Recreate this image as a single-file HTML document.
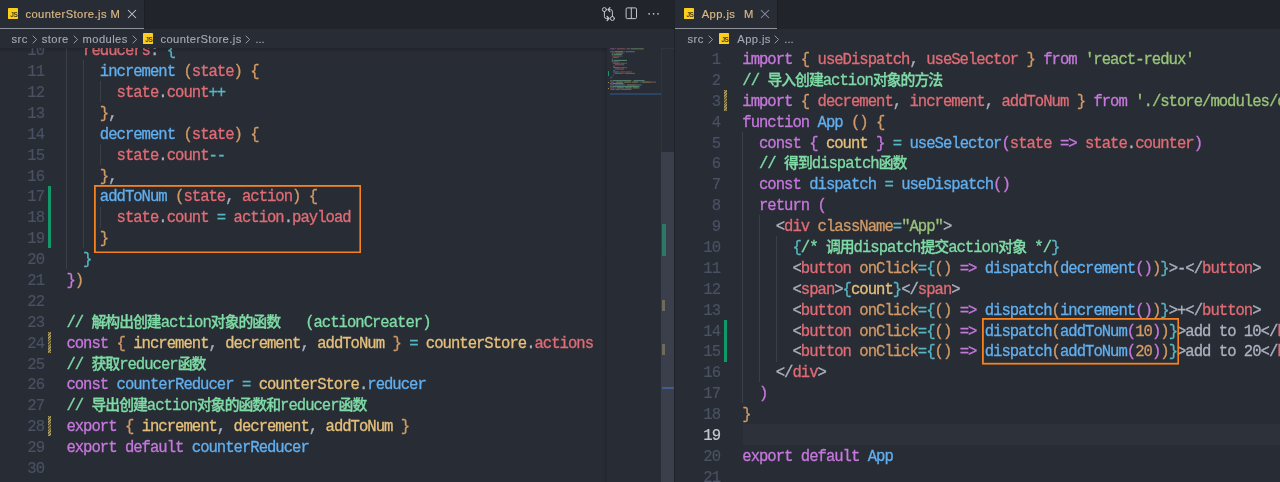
<!DOCTYPE html>
<html lang="zh-CN"><head><meta charset="utf-8"><title>VS Code - counterStore.js / App.js</title>
<style>
html,body{margin:0;padding:0;background:#282c34;}
body{width:1280px;height:482px;position:relative;overflow:hidden;font-family:"Liberation Sans","Noto Sans CJK SC",sans-serif;}
.abs{position:absolute;}
.pane{will-change:transform;position:absolute;top:0;height:482px;overflow:hidden;background:#282c34;}
.tabbar{position:absolute;left:0;right:0;top:0;height:29px;background:#21252b;}
.tab{position:absolute;top:0;height:28px;background:#282c34;border-bottom:1px solid #8f939b;box-shadow:1px 0 0 #1c1f24;}
.tlabel{position:absolute;white-space:pre;font-size:11.2px;line-height:14px;color:#d9b886;letter-spacing:0.42px;-webkit-text-stroke:0.18px;}
.bc{position:absolute;white-space:pre;font-size:11.2px;line-height:14px;color:#a4aab6;letter-spacing:0.4px;-webkit-text-stroke:0.12px;}
.jsico{position:absolute;width:10.4px;height:10.8px;background:#fbce1f;border-radius:0.4px;}
.jsico i{position:absolute;right:0.9px;bottom:0.6px;font:bold 6.6px/6px "Liberation Sans",sans-serif;color:#4d3f0e;font-style:normal;letter-spacing:-0.5px;}
.code{position:absolute;white-space:pre;font-family:"Liberation Mono","Noto Sans CJK SC",monospace;font-size:15.6px;letter-spacing:-1px;line-height:20.89px;height:20.89px;color:#abb2bf;-webkit-text-stroke:0.3px;}
.cj{font-size:14.85px;font-weight:500;}
.ln{position:absolute;white-space:pre;text-align:right;font-family:"Liberation Mono",monospace;font-size:15.6px;letter-spacing:-1px;line-height:20.89px;height:20.89px;color:#495162;width:40px;-webkit-text-stroke:0.2px;}
.ln.act{color:#c3c8d0;}
.k{color:#c678dd}.b{color:#61afef}.r{color:#e06c75}.g{color:#98c379}.c{color:#7fdba6}.o{color:#d19a66}.y{color:#e5c07b}.t{color:#56b6c2}.w{color:#abb2bf}
.guide{position:absolute;width:1px;background:#3b4048;}
.gadd{position:absolute;width:2.8px;background:#109868;}
.gmod{position:absolute;width:2.8px;background:repeating-linear-gradient(135deg,#a8975a 0,#a8975a 1px,#5e5840 1px,#5e5840 2px);}
.box{position:absolute;border:1.8px solid #f5821f;box-sizing:border-box;}
</style></head><body>

<div class="pane" style="left:0;width:674px;">
<div class="abs" style="left:0;top:47.6px;width:674px;height:435px;overflow:hidden;">
<div class="guide" style="left:66.3px;top:-28.97px;height:250.68px;"></div>
<div class="guide" style="left:83.03px;top:12.81px;height:188.01px;"></div>
<div class="guide" style="left:99.75px;top:33.7px;height:20.89px;"></div>
<div class="guide" style="left:99.75px;top:96.37px;height:20.89px;"></div>
<div class="guide" style="left:99.75px;top:159.04px;height:20.89px;"></div>
<div class="ln" style="left:4px;top:-6.38px;">10</div>
<div class="code" style="left:66.4px;top:-6.38px;"><span class="w">  </span><span class="r">reducers</span><span class="w">: </span><span class="t">{</span></div>
<div class="ln" style="left:4px;top:14.51px;">11</div>
<div class="code" style="left:66.4px;top:14.51px;"><span class="w">    </span><span class="b">increment</span><span class="w"> </span><span class="o">(</span><span class="r">state</span><span class="o">)</span><span class="w"> </span><span class="o">{</span></div>
<div class="ln" style="left:4px;top:35.4px;">12</div>
<div class="code" style="left:66.4px;top:35.4px;"><span class="w">      </span><span class="r">state</span><span class="w">.</span><span class="r">count</span><span class="t">++</span></div>
<div class="ln" style="left:4px;top:56.29px;">13</div>
<div class="code" style="left:66.4px;top:56.29px;"><span class="w">    </span><span class="o">}</span><span class="w">,</span></div>
<div class="ln" style="left:4px;top:77.18px;">14</div>
<div class="code" style="left:66.4px;top:77.18px;"><span class="w">    </span><span class="b">decrement</span><span class="w"> </span><span class="o">(</span><span class="r">state</span><span class="o">)</span><span class="w"> </span><span class="o">{</span></div>
<div class="ln" style="left:4px;top:98.07px;">15</div>
<div class="code" style="left:66.4px;top:98.07px;"><span class="w">      </span><span class="r">state</span><span class="w">.</span><span class="r">count</span><span class="t">--</span></div>
<div class="ln" style="left:4px;top:118.96px;">16</div>
<div class="code" style="left:66.4px;top:118.96px;"><span class="w">    </span><span class="o">}</span><span class="w">,</span></div>
<div class="ln" style="left:4px;top:139.85px;">17</div>
<div class="code" style="left:66.4px;top:139.85px;"><span class="w">    </span><span class="b">addToNum</span><span class="w"> </span><span class="o">(</span><span class="r">state</span><span class="w">, </span><span class="r">action</span><span class="o">)</span><span class="w"> </span><span class="o">{</span></div>
<div class="ln" style="left:4px;top:160.74px;">18</div>
<div class="code" style="left:66.4px;top:160.74px;"><span class="w">      </span><span class="r">state</span><span class="w">.</span><span class="r">count</span><span class="w"> </span><span class="t">=</span><span class="w"> </span><span class="r">action</span><span class="w">.</span><span class="r">payload</span></div>
<div class="ln" style="left:4px;top:181.63px;">19</div>
<div class="code" style="left:66.4px;top:181.63px;"><span class="w">    </span><span class="o">}</span></div>
<div class="ln" style="left:4px;top:202.52px;">20</div>
<div class="code" style="left:66.4px;top:202.52px;"><span class="w">  </span><span class="t">}</span></div>
<div class="ln" style="left:4px;top:223.41px;">21</div>
<div class="code" style="left:66.4px;top:223.41px;"><span class="w"></span><span class="k">}</span><span class="o">)</span></div>
<div class="ln" style="left:4px;top:244.3px;">22</div>
<div class="ln" style="left:4px;top:265.19px;">23</div>
<div class="code" style="left:66.4px;top:265.19px;"><span class="c">// <span class="cj">解构出创建</span>action<span class="cj">对象的函数</span>   (actionCreater)</span></div>
<div class="ln" style="left:4px;top:286.08px;">24</div>
<div class="code" style="left:66.4px;top:286.08px;"><span class="k">const</span><span class="w"> </span><span class="o">{</span><span class="w"> </span><span class="y">increment</span><span class="w">, </span><span class="y">decrement</span><span class="w">, </span><span class="y">addToNum</span><span class="w"> </span><span class="o">}</span><span class="w"> </span><span class="t">=</span><span class="w"> </span><span class="y">counterStore</span><span class="w">.</span><span class="r">actions</span></div>
<div class="ln" style="left:4px;top:306.97px;">25</div>
<div class="code" style="left:66.4px;top:306.97px;"><span class="c">// <span class="cj">获取</span>reducer<span class="cj">函数</span></span></div>
<div class="ln" style="left:4px;top:327.86px;">26</div>
<div class="code" style="left:66.4px;top:327.86px;"><span class="k">const</span><span class="w"> </span><span class="b">counterReducer</span><span class="w"> </span><span class="t">=</span><span class="w"> </span><span class="y">counterStore</span><span class="w">.</span><span class="b">reducer</span></div>
<div class="ln" style="left:4px;top:348.75px;">27</div>
<div class="code" style="left:66.4px;top:348.75px;"><span class="c">// <span class="cj">导出创建</span>action<span class="cj">对象的函数和</span>reducer<span class="cj">函数</span></span></div>
<div class="ln" style="left:4px;top:369.64px;">28</div>
<div class="code" style="left:66.4px;top:369.64px;"><span class="k">export</span><span class="w"> </span><span class="o">{</span><span class="w"> </span><span class="y">increment</span><span class="w">, </span><span class="y">decrement</span><span class="w">, </span><span class="y">addToNum</span><span class="w"> </span><span class="o">}</span></div>
<div class="ln" style="left:4px;top:390.53px;">29</div>
<div class="code" style="left:66.4px;top:390.53px;"><span class="k">export</span><span class="w"> </span><span class="k">default</span><span class="w"> </span><span class="b">counterReducer</span></div>
<div class="ln" style="left:4px;top:411.42px;">30</div>
<div class="gadd" style="left:48px;top:138.15px;height:62.67px;"></div>
<div class="gmod" style="left:48px;top:284.38px;height:20.89px;"></div>
<div class="gmod" style="left:48px;top:367.94px;height:20.89px;"></div>
<svg class="abs" style="left:93.8px;top:137.2px;" width="267.2" height="68.3"><rect x="0.9" y="0.9" width="265.4" height="66.5" fill="none" stroke="#f5821f" stroke-width="1.8"/></svg>
<div class="abs" style="left:0;top:0;width:607px;height:5px;background:linear-gradient(rgba(0,0,0,0.16),rgba(0,0,0,0));"></div>
</div>
<svg class="abs" style="left:606px;top:47px;" width="56" height="52" viewBox="606 47 56 52" opacity="0.5">
<rect x="610.3" y="48.3" width="4.36" height="1.05" fill="#c678dd"/>
<rect x="615.39" y="48.3" width="0.73" height="1.05" fill="#d19a66"/>
<rect x="616.84" y="48.3" width="8" height="1.05" fill="#e06c75"/>
<rect x="625.57" y="48.3" width="0.73" height="1.05" fill="#d19a66"/>
<rect x="627.02" y="48.3" width="2.91" height="1.05" fill="#c678dd"/>
<rect x="630.66" y="48.3" width="13.09" height="1.05" fill="#98c379"/>
<rect x="610.3" y="51.19" width="3.63" height="1.05" fill="#c678dd"/>
<rect x="614.66" y="51.19" width="8.72" height="1.05" fill="#e5c07b"/>
<rect x="624.11" y="51.19" width="0.73" height="1.05" fill="#56b6c2"/>
<rect x="625.57" y="51.19" width="8" height="1.05" fill="#61afef"/>
<rect x="633.56" y="51.19" width="0.73" height="1.05" fill="#d19a66"/>
<rect x="634.29" y="51.19" width="0.73" height="1.05" fill="#c678dd"/>
<rect x="611.75" y="52.64" width="2.91" height="1.05" fill="#e06c75"/>
<rect x="614.66" y="52.64" width="0.73" height="1.05" fill="#abb2bf"/>
<rect x="616.12" y="52.64" width="6.54" height="1.05" fill="#98c379"/>
<rect x="622.66" y="52.64" width="0.73" height="1.05" fill="#abb2bf"/>
<rect x="611.75" y="54.08" width="1.45" height="1.05" fill="#7fdba6"/>
<rect x="613.93" y="54.08" width="8" height="1.05" fill="#7fdba6"/>
<rect x="611.75" y="55.53" width="8.72" height="1.05" fill="#e06c75"/>
<rect x="620.48" y="55.53" width="0.73" height="1.05" fill="#abb2bf"/>
<rect x="621.93" y="55.53" width="0.73" height="1.05" fill="#56b6c2"/>
<rect x="613.21" y="56.98" width="3.63" height="1.05" fill="#e06c75"/>
<rect x="616.84" y="56.98" width="0.73" height="1.05" fill="#abb2bf"/>
<rect x="618.3" y="56.98" width="0.73" height="1.05" fill="#d19a66"/>
<rect x="611.75" y="58.42" width="0.73" height="1.05" fill="#56b6c2"/>
<rect x="612.48" y="58.42" width="0.73" height="1.05" fill="#abb2bf"/>
<rect x="611.75" y="59.87" width="1.45" height="1.05" fill="#7fdba6"/>
<rect x="613.93" y="59.87" width="13.09" height="1.05" fill="#7fdba6"/>
<rect x="611.75" y="61.31" width="5.82" height="1.05" fill="#e06c75"/>
<rect x="617.57" y="61.31" width="0.73" height="1.05" fill="#abb2bf"/>
<rect x="619.02" y="61.31" width="0.73" height="1.05" fill="#56b6c2"/>
<rect x="613.21" y="62.76" width="6.54" height="1.05" fill="#61afef"/>
<rect x="620.48" y="62.76" width="0.73" height="1.05" fill="#d19a66"/>
<rect x="621.2" y="62.76" width="3.63" height="1.05" fill="#e06c75"/>
<rect x="624.84" y="62.76" width="0.73" height="1.05" fill="#d19a66"/>
<rect x="626.29" y="62.76" width="0.73" height="1.05" fill="#d19a66"/>
<rect x="614.66" y="64.21" width="3.63" height="1.05" fill="#e06c75"/>
<rect x="618.3" y="64.21" width="0.73" height="1.05" fill="#abb2bf"/>
<rect x="619.02" y="64.21" width="3.63" height="1.05" fill="#e06c75"/>
<rect x="622.66" y="64.21" width="1.45" height="1.05" fill="#56b6c2"/>
<rect x="613.21" y="65.65" width="0.73" height="1.05" fill="#d19a66"/>
<rect x="613.93" y="65.65" width="0.73" height="1.05" fill="#abb2bf"/>
<rect x="613.21" y="67.1" width="6.54" height="1.05" fill="#61afef"/>
<rect x="620.48" y="67.1" width="0.73" height="1.05" fill="#d19a66"/>
<rect x="621.2" y="67.1" width="3.63" height="1.05" fill="#e06c75"/>
<rect x="624.84" y="67.1" width="0.73" height="1.05" fill="#d19a66"/>
<rect x="626.29" y="67.1" width="0.73" height="1.05" fill="#d19a66"/>
<rect x="614.66" y="68.54" width="3.63" height="1.05" fill="#e06c75"/>
<rect x="618.3" y="68.54" width="0.73" height="1.05" fill="#abb2bf"/>
<rect x="619.02" y="68.54" width="3.63" height="1.05" fill="#e06c75"/>
<rect x="622.66" y="68.54" width="1.45" height="1.05" fill="#56b6c2"/>
<rect x="613.21" y="69.99" width="0.73" height="1.05" fill="#d19a66"/>
<rect x="613.93" y="69.99" width="0.73" height="1.05" fill="#abb2bf"/>
<rect x="613.21" y="71.44" width="5.82" height="1.05" fill="#61afef"/>
<rect x="619.75" y="71.44" width="0.73" height="1.05" fill="#d19a66"/>
<rect x="620.48" y="71.44" width="3.63" height="1.05" fill="#e06c75"/>
<rect x="624.11" y="71.44" width="0.73" height="1.05" fill="#abb2bf"/>
<rect x="625.57" y="71.44" width="4.36" height="1.05" fill="#e06c75"/>
<rect x="629.93" y="71.44" width="0.73" height="1.05" fill="#d19a66"/>
<rect x="631.38" y="71.44" width="0.73" height="1.05" fill="#d19a66"/>
<rect x="614.66" y="72.88" width="3.63" height="1.05" fill="#e06c75"/>
<rect x="618.3" y="72.88" width="0.73" height="1.05" fill="#abb2bf"/>
<rect x="619.02" y="72.88" width="3.63" height="1.05" fill="#e06c75"/>
<rect x="623.39" y="72.88" width="0.73" height="1.05" fill="#56b6c2"/>
<rect x="624.84" y="72.88" width="4.36" height="1.05" fill="#e06c75"/>
<rect x="629.2" y="72.88" width="0.73" height="1.05" fill="#abb2bf"/>
<rect x="629.93" y="72.88" width="5.09" height="1.05" fill="#e06c75"/>
<rect x="613.21" y="74.33" width="0.73" height="1.05" fill="#d19a66"/>
<rect x="611.75" y="75.77" width="0.73" height="1.05" fill="#56b6c2"/>
<rect x="610.3" y="77.22" width="0.73" height="1.05" fill="#c678dd"/>
<rect x="611.03" y="77.22" width="0.73" height="1.05" fill="#d19a66"/>
<rect x="610.3" y="80.11" width="1.45" height="1.05" fill="#7fdba6"/>
<rect x="612.48" y="80.11" width="18.9" height="1.05" fill="#7fdba6"/>
<rect x="633.56" y="80.11" width="10.9" height="1.05" fill="#7fdba6"/>
<rect x="610.3" y="81.56" width="3.63" height="1.05" fill="#c678dd"/>
<rect x="614.66" y="81.56" width="0.73" height="1.05" fill="#d19a66"/>
<rect x="616.12" y="81.56" width="6.54" height="1.05" fill="#e5c07b"/>
<rect x="622.66" y="81.56" width="0.73" height="1.05" fill="#abb2bf"/>
<rect x="624.11" y="81.56" width="6.54" height="1.05" fill="#e5c07b"/>
<rect x="630.66" y="81.56" width="0.73" height="1.05" fill="#abb2bf"/>
<rect x="632.11" y="81.56" width="5.82" height="1.05" fill="#e5c07b"/>
<rect x="638.65" y="81.56" width="0.73" height="1.05" fill="#d19a66"/>
<rect x="640.11" y="81.56" width="0.73" height="1.05" fill="#56b6c2"/>
<rect x="641.56" y="81.56" width="8.72" height="1.05" fill="#e5c07b"/>
<rect x="650.28" y="81.56" width="0.73" height="1.05" fill="#abb2bf"/>
<rect x="651.01" y="81.56" width="5.09" height="1.05" fill="#e06c75"/>
<rect x="610.3" y="83" width="1.45" height="1.05" fill="#7fdba6"/>
<rect x="612.48" y="83" width="10.9" height="1.05" fill="#7fdba6"/>
<rect x="610.3" y="84.45" width="3.63" height="1.05" fill="#c678dd"/>
<rect x="614.66" y="84.45" width="10.18" height="1.05" fill="#61afef"/>
<rect x="625.57" y="84.45" width="0.73" height="1.05" fill="#56b6c2"/>
<rect x="627.02" y="84.45" width="8.72" height="1.05" fill="#e5c07b"/>
<rect x="635.75" y="84.45" width="0.73" height="1.05" fill="#abb2bf"/>
<rect x="636.47" y="84.45" width="5.09" height="1.05" fill="#61afef"/>
<rect x="610.3" y="85.9" width="1.45" height="1.05" fill="#7fdba6"/>
<rect x="612.48" y="85.9" width="26.9" height="1.05" fill="#7fdba6"/>
<rect x="610.3" y="87.34" width="4.36" height="1.05" fill="#c678dd"/>
<rect x="615.39" y="87.34" width="0.73" height="1.05" fill="#d19a66"/>
<rect x="616.84" y="87.34" width="6.54" height="1.05" fill="#e5c07b"/>
<rect x="623.39" y="87.34" width="0.73" height="1.05" fill="#abb2bf"/>
<rect x="624.84" y="87.34" width="6.54" height="1.05" fill="#e5c07b"/>
<rect x="631.38" y="87.34" width="0.73" height="1.05" fill="#abb2bf"/>
<rect x="632.84" y="87.34" width="5.82" height="1.05" fill="#e5c07b"/>
<rect x="639.38" y="87.34" width="0.73" height="1.05" fill="#d19a66"/>
<rect x="610.3" y="88.79" width="4.36" height="1.05" fill="#c678dd"/>
<rect x="615.39" y="88.79" width="5.09" height="1.05" fill="#c678dd"/>
<rect x="621.2" y="88.79" width="10.18" height="1.05" fill="#61afef"/>
</svg>
<div class="abs" style="left:607.9px;top:71.3px;width:1.2px;height:4.6px;background:#109868;"></div>
<div class="abs" style="left:607.9px;top:81.8px;width:1.2px;height:1.5px;background:#a08d4c;"></div>
<div class="abs" style="left:607.9px;top:87.6px;width:1.2px;height:1.5px;background:#a08d4c;"></div>
<div class="abs" style="left:610px;top:93.1px;width:51px;height:1.8px;background:#2b4463;"></div>
<div class="abs" style="left:601px;top:47.6px;width:6px;height:435px;background:linear-gradient(90deg,rgba(0,0,0,0),rgba(0,0,0,0.09));"></div>
<div class="abs" style="left:661px;top:47.6px;width:13px;height:435px;background:#292d35;border-left:1px solid #30343c;border-top:1px solid #30343c;box-sizing:border-box;"></div>
<div class="abs" style="left:661px;top:151.9px;width:13px;height:331px;background:#3a3f4b;"></div>
<div class="abs" style="left:661.9px;top:223.6px;width:3.7px;height:32.4px;background:#2b7a68;"></div>
<div class="abs" style="left:661.7px;top:299.9px;width:3.8px;height:11.5px;background:#6c6b5c;"></div>
<div class="abs" style="left:661.7px;top:344px;width:3.8px;height:11px;background:#6c6b5c;"></div>
<div class="abs" style="left:661.6px;top:387.2px;width:12.2px;height:2.2px;background:#3f5d91;"></div>
<div class="tabbar"></div>
<div class="tab" style="left:0;width:144px;"></div>
<div class="jsico" style="left:7.9px;top:8.2px;"><i>JS</i></div>
<div class="tlabel" id="t1" style="left:25.4px;top:6.6px;">counterStore.js</div>
<div class="tlabel" id="t1m" style="left:110.6px;top:6.6px;">M</div>
<svg class="abs" style="left:127px;top:9px;" width="10" height="10" viewBox="0 0 10 10"><path d="M1 1 L9 9 M9 1 L1 9" stroke="#c6cad2" stroke-width="1.05" fill="none"/></svg>
<svg class="abs" style="left:598px;top:4px;" width="24" height="20" viewBox="598 4 24 20" fill="none" stroke="#c3c7ce" stroke-width="1" stroke-linecap="round" stroke-linejoin="round"><circle cx="604.4" cy="9.6" r="2"/><circle cx="612.4" cy="18.5" r="2"/><path d="M604.4 11.6 V16.6 Q604.4 18.5 606.3 18.5 H608.7"/><path d="M607.1 16.5 L609 18.5 L607.1 20.5" stroke-width="1.25"/><path d="M612.4 16.5 V11.5 Q612.4 9.6 610.5 9.6 H608.3"/><path d="M609.9 7.6 L608 9.6 L609.9 11.6" stroke-width="1.25"/></svg>
<svg class="abs" style="left:622px;top:4px;" width="20" height="20" viewBox="622 4 20 20" fill="none" stroke="#c3c7ce" stroke-width="1"><rect x="626.1" y="7.9" width="10.4" height="10.7" rx="1.2"/><path d="M631.3 7.9 V18.6"/></svg>
<svg class="abs" style="left:645px;top:10px;" width="18" height="8" viewBox="645 10 18 8" fill="#c3c7ce"><circle cx="649.1" cy="13.8" r="0.85"/><circle cx="653.6" cy="13.8" r="0.85"/><circle cx="658" cy="13.8" r="0.85"/></svg>
<div class="bc" id="b1" style="left:11.6px;top:31.6px;">src</div>
<div class="bc" id="b2" style="left:41.8px;top:31.6px;">store</div>
<div class="bc" id="b3" style="left:82.6px;top:31.6px;">modules</div>
<div class="jsico" style="left:142.9px;top:33.1px;"><i>JS</i></div>
<div class="bc" id="b4" style="left:160.4px;top:31.6px;">counterStore.js</div>
<div class="bc" id="b5" style="left:255.4px;top:31.6px;letter-spacing:0;">...</div>
<svg class="abs" style="left:32.05px;top:34.8px;" width="6" height="9" viewBox="0 0 6 9"><path d="M0.7 0.7 L4.6 4.5 L0.7 8.3" stroke="#9ba1ad" stroke-width="0.95" fill="none"/></svg>
<svg class="abs" style="left:72.8px;top:34.8px;" width="6" height="9" viewBox="0 0 6 9"><path d="M0.7 0.7 L4.6 4.5 L0.7 8.3" stroke="#9ba1ad" stroke-width="0.95" fill="none"/></svg>
<svg class="abs" style="left:131.8px;top:34.8px;" width="6" height="9" viewBox="0 0 6 9"><path d="M0.7 0.7 L4.6 4.5 L0.7 8.3" stroke="#9ba1ad" stroke-width="0.95" fill="none"/></svg>
<svg class="abs" style="left:244.9px;top:34.8px;" width="6" height="9" viewBox="0 0 6 9"><path d="M0.7 0.7 L4.6 4.5 L0.7 8.3" stroke="#9ba1ad" stroke-width="0.95" fill="none"/></svg>
</div>
<div class="pane" style="left:674px;width:606px;">
<div class="abs" style="left:0;top:47.6px;width:606px;height:435px;overflow:hidden;">
<div class="abs" style="left:68.5px;top:376.67px;width:600px;height:20.89px;background:#2c313a;"></div>
<div class="guide" style="left:68.2px;top:84.21px;height:271.57px;"></div>
<div class="guide" style="left:84.93px;top:167.77px;height:167.12px;"></div>
<div class="guide" style="left:101.65px;top:188.66px;height:125.34px;"></div>
<div class="ln" style="left:6px;top:2.35px;">1</div>
<div class="code" style="left:68.3px;top:2.35px;"><span class="k">import</span><span class="w"> </span><span class="o">{</span><span class="w"> </span><span class="r">useDispatch</span><span class="w">, </span><span class="r">useSelector</span><span class="w"> </span><span class="o">}</span><span class="w"> </span><span class="k">from</span><span class="w"> </span><span class="g">&#x27;react-redux&#x27;</span></div>
<div class="ln" style="left:6px;top:23.24px;">2</div>
<div class="code" style="left:68.3px;top:23.24px;"><span class="c">// <span class="cj">导入创建</span>action<span class="cj">对象的方法</span></span></div>
<div class="ln" style="left:6px;top:44.13px;">3</div>
<div class="code" style="left:68.3px;top:44.13px;"><span class="k">import</span><span class="w"> </span><span class="o">{</span><span class="w"> </span><span class="r">decrement</span><span class="w">, </span><span class="r">increment</span><span class="w">, </span><span class="r">addToNum</span><span class="w"> </span><span class="o">}</span><span class="w"> </span><span class="k">from</span><span class="w"> </span><span class="g">&#x27;./store/modules/counterStore&#x27;</span></div>
<div class="ln" style="left:6px;top:65.02px;">4</div>
<div class="code" style="left:68.3px;top:65.02px;"><span class="k">function</span><span class="w"> </span><span class="b">App</span><span class="w"> </span><span class="o">()</span><span class="w"> </span><span class="o">{</span></div>
<div class="ln" style="left:6px;top:85.91px;">5</div>
<div class="code" style="left:68.3px;top:85.91px;"><span class="w">  </span><span class="k">const</span><span class="w"> </span><span class="k">{</span><span class="w"> </span><span class="y">count</span><span class="w"> </span><span class="k">}</span><span class="w"> </span><span class="t">=</span><span class="w"> </span><span class="b">useSelector</span><span class="k">(</span><span class="r">state</span><span class="w"> </span><span class="k">=&gt;</span><span class="w"> </span><span class="r">state</span><span class="w">.</span><span class="r">counter</span><span class="k">)</span></div>
<div class="ln" style="left:6px;top:106.8px;">6</div>
<div class="code" style="left:68.3px;top:106.8px;"><span class="w">  </span><span class="c">// <span class="cj">得到</span>dispatch<span class="cj">函数</span></span></div>
<div class="ln" style="left:6px;top:127.69px;">7</div>
<div class="code" style="left:68.3px;top:127.69px;"><span class="w">  </span><span class="k">const</span><span class="w"> </span><span class="b">dispatch</span><span class="w"> </span><span class="t">=</span><span class="w"> </span><span class="b">useDispatch</span><span class="k">()</span></div>
<div class="ln" style="left:6px;top:148.58px;">8</div>
<div class="code" style="left:68.3px;top:148.58px;"><span class="w">  </span><span class="k">return</span><span class="w"> </span><span class="k">(</span></div>
<div class="ln" style="left:6px;top:169.47px;">9</div>
<div class="code" style="left:68.3px;top:169.47px;"><span class="w">    &lt;</span><span class="r">div</span><span class="w"> </span><span class="o">className</span><span class="t">=</span><span class="g">&quot;App&quot;</span><span class="w">&gt;</span></div>
<div class="ln" style="left:6px;top:190.36px;">10</div>
<div class="code" style="left:68.3px;top:190.36px;"><span class="w">      </span><span class="t">{</span><span class="c">/* <span class="cj">调用</span>dispatch<span class="cj">提交</span>action<span class="cj">对象</span> */</span><span class="t">}</span></div>
<div class="ln" style="left:6px;top:211.25px;">11</div>
<div class="code" style="left:68.3px;top:211.25px;"><span class="w">      &lt;</span><span class="r">button</span><span class="w"> </span><span class="o">onClick</span><span class="t">={</span><span class="o">()</span><span class="w"> </span><span class="k">=&gt;</span><span class="w"> </span><span class="b">dispatch</span><span class="o">(</span><span class="b">decrement</span><span class="k">()</span><span class="o">)</span><span class="t">}</span><span class="w">&gt;-&lt;/</span><span class="r">button</span><span class="w">&gt;</span></div>
<div class="ln" style="left:6px;top:232.14px;">12</div>
<div class="code" style="left:68.3px;top:232.14px;"><span class="w">      &lt;</span><span class="r">span</span><span class="w">&gt;</span><span class="t">{</span><span class="y">count</span><span class="t">}</span><span class="w">&lt;/</span><span class="r">span</span><span class="w">&gt;</span></div>
<div class="ln" style="left:6px;top:253.03px;">13</div>
<div class="code" style="left:68.3px;top:253.03px;"><span class="w">      &lt;</span><span class="r">button</span><span class="w"> </span><span class="o">onClick</span><span class="t">={</span><span class="o">()</span><span class="w"> </span><span class="k">=&gt;</span><span class="w"> </span><span class="b">dispatch</span><span class="o">(</span><span class="b">increment</span><span class="k">()</span><span class="o">)</span><span class="t">}</span><span class="w">&gt;+&lt;/</span><span class="r">button</span><span class="w">&gt;</span></div>
<div class="ln" style="left:6px;top:273.92px;">14</div>
<div class="code" style="left:68.3px;top:273.92px;"><span class="w">      &lt;</span><span class="r">button</span><span class="w"> </span><span class="o">onClick</span><span class="t">={</span><span class="o">()</span><span class="w"> </span><span class="k">=&gt;</span><span class="w"> </span><span class="b">dispatch</span><span class="o">(</span><span class="b">addToNum</span><span class="k">(</span><span class="o">10</span><span class="k">)</span><span class="o">)</span><span class="t">}</span><span class="w">&gt;add to 10&lt;/</span><span class="r">button</span><span class="w">&gt;</span></div>
<div class="ln" style="left:6px;top:294.81px;">15</div>
<div class="code" style="left:68.3px;top:294.81px;"><span class="w">      &lt;</span><span class="r">button</span><span class="w"> </span><span class="o">onClick</span><span class="t">={</span><span class="o">()</span><span class="w"> </span><span class="k">=&gt;</span><span class="w"> </span><span class="b">dispatch</span><span class="o">(</span><span class="b">addToNum</span><span class="k">(</span><span class="o">20</span><span class="k">)</span><span class="o">)</span><span class="t">}</span><span class="w">&gt;add to 20&lt;/</span><span class="r">button</span><span class="w">&gt;</span></div>
<div class="ln" style="left:6px;top:315.7px;">16</div>
<div class="code" style="left:68.3px;top:315.7px;"><span class="w">    &lt;/</span><span class="r">div</span><span class="w">&gt;</span></div>
<div class="ln" style="left:6px;top:336.59px;">17</div>
<div class="code" style="left:68.3px;top:336.59px;"><span class="w">  </span><span class="k">)</span></div>
<div class="ln" style="left:6px;top:357.48px;">18</div>
<div class="code" style="left:68.3px;top:357.48px;"><span class="o">}</span></div>
<div class="ln act" style="left:6px;top:378.37px;">19</div>
<div class="ln" style="left:6px;top:399.26px;">20</div>
<div class="code" style="left:68.3px;top:399.26px;"><span class="k">export</span><span class="w"> </span><span class="k">default</span><span class="w"> </span><span class="b">App</span></div>
<div class="ln" style="left:6px;top:420.15px;">21</div>
<div class="gadd" style="left:50.2px;top:272.22px;height:41.78px;"></div>
<div class="gmod" style="left:50.2px;top:42.43px;height:20.89px;"></div>
<svg class="abs" style="left:307.8px;top:270.5px;" width="197.2" height="46.6"><rect x="0.9" y="0.9" width="195.4" height="44.8" fill="none" stroke="#f5821f" stroke-width="1.8"/></svg>
</div>
<div class="tabbar"></div>
<div class="tab" style="left:0;width:103.3px;"></div>
<div class="jsico" style="left:10px;top:8.2px;"><i>JS</i></div>
<div class="tlabel" id="t2" style="left:27.7px;top:6.6px;">App.js</div>
<div class="tlabel" id="t2m" style="left:70px;top:6.6px;">M</div>
<svg class="abs" style="left:86.2px;top:9px;" width="10" height="10" viewBox="0 0 10 10"><path d="M1 1 L9 9 M9 1 L1 9" stroke="#8d929c" stroke-width="1.05" fill="none"/></svg>
<div class="abs" style="left:0;top:0;width:1px;height:482px;background:#1f2228;"></div>
<div class="bc" id="b6" style="left:13.6px;top:31.6px;">src</div>
<div class="jsico" style="left:45px;top:33.1px;"><i>JS</i></div>
<div class="bc" id="b7" style="left:63.3px;top:31.6px;">App.js</div>
<div class="bc" id="b8" style="left:110.3px;top:31.6px;letter-spacing:0;">...</div>
<svg class="abs" style="left:34.3px;top:34.8px;" width="6" height="9" viewBox="0 0 6 9"><path d="M0.7 0.7 L4.6 4.5 L0.7 8.3" stroke="#9ba1ad" stroke-width="0.95" fill="none"/></svg>
<svg class="abs" style="left:100.3px;top:34.8px;" width="6" height="9" viewBox="0 0 6 9"><path d="M0.7 0.7 L4.6 4.5 L0.7 8.3" stroke="#9ba1ad" stroke-width="0.95" fill="none"/></svg>
</div>
</body></html>
